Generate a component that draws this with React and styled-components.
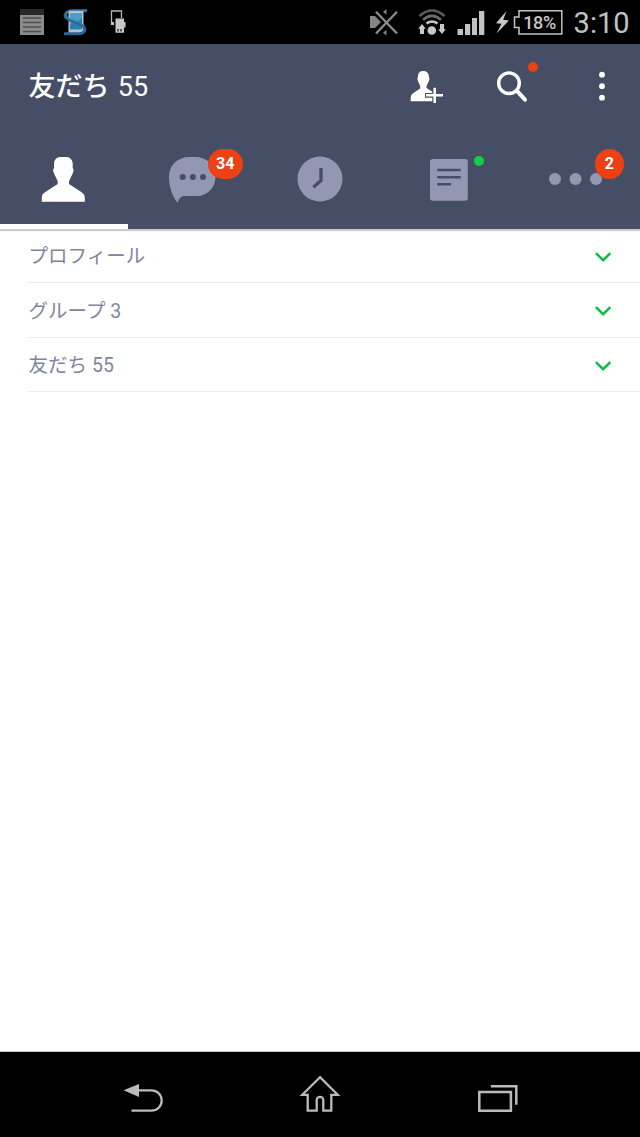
import React from "react"
import styled, { createGlobalStyle } from "styled-components"

const GlobalStyle = createGlobalStyle`
	body {
		margin: 0;
		background: #fff;
		font-family: Roboto, "Noto Sans CJK JP", sans-serif;
	}

	svg {
		display: block;
		flex: none;
	}
`

const Screen = styled.div`
	display: flex;
	flex-direction: column;
	height: 1137px;
	width: 640px;
	overflow: hidden;
`

const StatusBar = styled.div`
	display: flex;
	align-items: center;
	justify-content: space-between;
	height: 44px;
	padding: 0 10.5px 0 19px;
	box-sizing: border-box;
	background: #000;
`

const StatusGroup = styled.div`
	display: flex;
	align-items: center;
	gap: ${({ $gap }) => $gap}px;
`

const PowerGroup = styled(StatusGroup)`
	margin-left: -9px;
`

const Battery = styled.div`
	position: relative;
	width: 50px;
	height: 28px;
	margin-left: -3px;
`

const BatteryText = styled.span`
	position: absolute;
	inset: 0 0 0 3px;
	line-height: 29px;
	font-size: 18px;
	font-weight: 500;
	letter-spacing: -0.4px;
	text-align: center;
	color: #c6c6c6;
`

const Clock = styled.span`
	width: 56px;
	margin-left: 4.5px;
	padding-top: 2px;
	font-size: 29px;
	line-height: 42px;
	text-align: right;
	white-space: nowrap;
	color: #c2c2c2;
`

const Header = styled.header`
	position: relative;
	z-index: 1;
	display: flex;
	align-items: center;
	justify-content: space-between;
	height: 86px;
	padding-left: 28.5px;
	background: #464e65;
`

const Title = styled.h1`
	margin: 0;
	font-size: 27px;
	font-weight: 500;
	line-height: 40px;
	color: #fff;
`

const Count = styled.span`
	margin-left: 1.5px;
	font-weight: 400;
`

const Actions = styled.div`
	display: flex;
`

const Action = styled.div`
	position: relative;
	display: flex;
	justify-content: center;
	width: ${({ $width }) => $width}px;
`

const Tabs = styled.nav`
	position: relative;
	display: grid;
	grid-template-columns: repeat(5, 1fr);
	height: 99px;
	background: #464e65;
	box-shadow: 0 2px 1px rgba(0, 0, 0, 0.2);
`

const Tab = styled.div`
	position: relative;
	display: flex;
	justify-content: center;
	padding-top: 18px;
	box-sizing: border-box;
	border-bottom: 5px solid ${({ $active }) => ($active ? "#fff" : "transparent")};
	color: ${({ $active }) => ($active ? "#fff" : "#9397b2")};
`

const Badge = styled.span`
	position: absolute;
	top: 19px;
	left: ${({ $left }) => $left}px;
	width: ${({ $width }) => $width}px;
	height: 29.5px;
	border-radius: 15px;
	background: #ee4015;
	color: #fff;
	font-size: 16px;
	font-weight: 700;
	line-height: 29.5px;
	text-align: center;
`

const Dot = styled.span`
	position: absolute;
	top: ${({ $top }) => $top}px;
	left: ${({ $left }) => $left}px;
	width: 10px;
	height: 10px;
	border-radius: 50%;
	background: ${({ $color }) => $color};
`

const List = styled.ul`
	flex: 1;
	margin: 0;
	padding: 0 0 0 28px;
	list-style: none;
	background: #fff;
	border-bottom: 1px solid #c4c4c4;
`

const ListItem = styled.li`
	display: flex;
	align-items: center;
	justify-content: space-between;
	height: 54.33px;
	padding: 0 28px 0 0.6px;
	box-sizing: border-box;
	border-bottom: 1px solid #ececee;
	font-size: 19.5px;
	color: #80869a;

	span {
		margin-bottom: 1.5px;
	}

	svg {
		margin-top: 3px;
	}
`

const NavBar = styled.footer`
	display: flex;
	justify-content: center;
	height: 85px;
	background: #000;
`

const NavButton = styled.div`
	display: flex;
	justify-content: center;
	width: 177.5px;
	padding-top: 20px;
`

const NoteIcon = () => (
	<svg width="26" height="28" viewBox="0 0 26 28">
		<rect x="1" y="1" width="24" height="26" fill="#8b8b8b" />
		<rect x="1" y="1" width="24" height="6" fill="#292929" />
		<path d="M4 10h18M4 14.5h18M4 19h18M4 23.5h18" stroke="#505050" strokeWidth="1.3" />
	</svg>
)

const SyncIcon = () => (
	<svg width="26" height="28" viewBox="0 0 26 28">
		<path
			d="M24 2.8H9C3 2.8.5 7 3.2 10.2"
			fill="none"
			stroke="#2b6896"
			strokeWidth="2.8"
		/>
		<rect x="5.5" y="3" width="15" height="23" fill="#b9c0c6" />
		<rect x="7" y="5.5" width="12" height="16" fill="#2682b3" />
		<path d="M7 5.5h12v5l-12 6z" fill="#4a9ccd" />
		<path
			d="M2.5 8.5c3 5.5 14.5 5 18.5 10.5 2.300 3.500-.5 6.700-5 6.700H1"
			fill="none"
			stroke="#2a6591"
			strokeWidth="3"
		/>
		<path
			d="M24 2.200H9C4.500 2.200 2 6 3.500 8.600c3 4 14 4.500 17.500 9.400"
			fill="none"
			stroke="#4586b3"
			strokeWidth="1.2"
		/>
	</svg>
)

const UsbIcon = () => (
	<svg width="18" height="28" viewBox="0 0 18 28">
		<path d="M3.5 16h-2V3h10v7" fill="none" stroke="#b5b5b5" strokeWidth="1.3" />
		<path d="M1 14h3v3H1z" fill="#c4c4c4" />
		<path d="M5.5 10.500H14V14h1.500v5.500H14v5.200H5.500z" fill="#c8c8c8" />
		<path d="M8 21v2.500M11 21v2.500" stroke="#333" strokeWidth="1.5" />
	</svg>
)

const MuteIcon = () => (
	<svg width="30" height="28" viewBox="0 0 30 28">
		<path d="M1 8h5l6 6-6 6H1zM17.500 1v5.500L14 4zM17.500 27.500V22L14 24.500z" fill="#858585" />
		<path d="M7 3.800 28 25.500M28 3.800 7 25.500" stroke="#000" strokeWidth="4" />
		<path d="M7 3.800 28 25.500M28 3.800 7 25.500" stroke="#8c8c8c" strokeWidth="2.3" />
	</svg>
)

const WifiIcon = () => (
	<svg width="28" height="28" viewBox="0 0 28 28">
		<g fill="none" strokeWidth="2.6">
			<path d="M1.500 8Q14-3 26.500 8" stroke="#5c5c5c" />
			<path d="M5 11.800Q14 4 23 11.800" stroke="#6d6d6d" />
			<path d="M8.500 15.500Q14 11.500 19.500 15.500" stroke="#c8c8c8" />
		</g>
		<circle cx="13.8" cy="22.5" r="4.3" fill="#c8c8c8" />
		<path
			d="M4 16 .2 20.800H2V26h4v-5.200h1.800zM24 26l-3.800-4.800H22V16h4v5.200h1.800z"
			fill="#c8c8c8"
		/>
	</svg>
)

const SignalIcon = () => (
	<svg width="28" height="28" viewBox="0 0 28 28">
		<path
			d="M.5 21H6v6H.5zM8 16h5.200v11H8zM15 10h5v17h-5zM22 3h5.300v24H22z"
			fill="#c3c3c3"
		/>
	</svg>
)

const BoltIcon = () => (
	<svg width="15" height="28" viewBox="0 0 15 28">
		<path d="M11.500 3 1 15.200l5.500.6L1.500 25.500 14 12.500l-5.800-.7z" fill="#c8c8c8" />
	</svg>
)

const BatteryIcon = () => (
	<svg width="50" height="28" viewBox="0 0 50 28">
		<path
			d="M6 2.700h42.800V26H6v-6.500H1.500V9H6z"
			fill="none"
			stroke="#c4c4c4"
			strokeWidth="1.5"
		/>
	</svg>
)

const AddFriendIcon = () => (
	<svg width="36" height="36" viewBox="0 0 36 36">
		<path
			d="M12.800 2h2.700c2.800.5 4.500 2.800 4.500 6.200l.5 1.600-.7 2.500-2.300 4.700v2l8.500 5.500c2 1.500 2 3 2 7.700H1.700c0-4.700 0-6 2-7.700l7.500-5v-2.500L9 12.300l-.6-2.500.4-1.600C8.800 4.800 10.300 2.500 12.800 2z"
			fill="#fff"
		/>
		<path d="M16 26.300h19M25.700 17.500v18" stroke="#464e65" strokeWidth="4.8" />
		<path d="M17 26.300h17M25.700 18.700v15.300" stroke="#fff" strokeWidth="2.5" />
	</svg>
)

const SearchIcon = () => (
	<svg width="36" height="36" viewBox="0 0 36 36" fill="none" stroke="#fff">
		<circle cx="15" cy="14.2" r="10.3" strokeWidth="3.4" />
		<path d="m22.700 21.700 8.300 9" strokeWidth="4" strokeLinecap="round" />
	</svg>
)

const MenuIcon = () => (
	<svg width="36" height="36" viewBox="0 0 36 36" fill="#fff">
		<circle cx="18" cy="5.7" r="2.9" />
		<circle cx="18" cy="17.2" r="2.9" />
		<circle cx="18" cy="28.7" r="2.9" />
	</svg>
)

const FriendsIcon = () => (
	<svg width="64" height="64" viewBox="0 0 64 64" fill="currentColor">
		<path d="M27.300 9h8c3.300.6 5.100 3 5.400 6.300V20l1 2-1 3.500-3.700 7.800V36l11.500 7.500c3.200 2 4.300 3.500 4.300 6.300v3.900h-43v-3.900c0-2.800 1.100-4.300 4.300-6.300L25.700 36v-2.700L22 25.500 21 22l1-2v-4.700c.3-3.300 2-5.700 5.300-6.300z" />
	</svg>
)

const ChatIcon = () => (
	<svg width="64" height="64" viewBox="0 0 64 64">
		<path
			d="M30 9h5c12 0 20.500 8 20.500 19.500S47 48 37 48H24.500c-3.500 0-5 2-7 6.700C12 48 9 38 9 29 9 17 17.500 9 30 9z"
			fill="currentColor"
		/>
		<g fill="#464e65">
			<circle cx="22.7" cy="29" r="3" />
			<circle cx="32.8" cy="29" r="3" />
			<circle cx="43" cy="29" r="3" />
		</g>
	</svg>
)

const TimelineIcon = () => (
	<svg width="64" height="64" viewBox="0 0 64 64">
		<circle cx="32" cy="31" r="22.5" fill="currentColor" />
		<path d="M33 20v12.500l-7.700 6.800" fill="none" stroke="#464e65" strokeWidth="3.3" />
	</svg>
)

const NewsIcon = () => (
	<svg width="64" height="64" viewBox="0 0 64 64">
		<rect x="14" y="11" width="37.8" height="41.8" rx="2.8" fill="currentColor" />
		<path d="M21.200 22h23.500M21.200 29.300h23.500M21.200 36.300H35" stroke="#464e65" strokeWidth="2.6" />
	</svg>
)

const MoreIcon = () => (
	<svg width="64" height="64" viewBox="0 0 64 64" fill="currentColor">
		<circle cx="11" cy="31" r="6" />
		<circle cx="31.6" cy="31" r="6" />
		<circle cx="52" cy="31" r="6" />
	</svg>
)

const ChevronIcon = () => (
	<svg width="18" height="12" viewBox="0 0 18 12">
		<path d="m1.900 2.200 7.200 7 7.200-7" fill="none" stroke="#09bf41" strokeWidth="2.5" />
	</svg>
)

const BackIcon = () => (
	<svg width="44" height="44" viewBox="0 0 44 44">
		<path d="M2.500 18.300 18 12v13z" fill="#bbb" />
		<path d="M17 18.300h13.500a10.200 10.200 0 0 1 0 20.400h-20" fill="none" stroke="#bbb" strokeWidth="2.3" />
	</svg>
)

const HomeIcon = () => (
	<svg width="44" height="44" viewBox="0 0 44 44">
		<path
			d="M22 5.200 4.300 22.800h5.400v15.900h9V28.200a3.300 3.300 0 0 1 6.600 0v10.500h8V22.800h6.400z"
			fill="none"
			stroke="#bbb"
			strokeWidth="2.3"
		/>
	</svg>
)

const RecentIcon = () => (
	<svg width="44" height="44" viewBox="0 0 44 44" fill="none" stroke="#bbb" strokeWidth="2.5">
		<path d="M3.300 20h31.600v18.700H3.300zM14.800 14.300h25.500v18.500" />
	</svg>
)

const sections = ["プロフィール", "グループ 3", "友だち 55"]

const App = () => (
	<Screen>
		<GlobalStyle />
		<StatusBar>
			<StatusGroup $gap={21}>
				<StatusGroup $gap={18}>
					<NoteIcon />
					<SyncIcon />
				</StatusGroup>
				<UsbIcon />
			</StatusGroup>
			<StatusGroup $gap={19}>
				<MuteIcon />
				<StatusGroup $gap={11}>
					<WifiIcon />
					<SignalIcon />
				</StatusGroup>
				<PowerGroup $gap={6}>
					<BoltIcon />
					<Battery>
						<BatteryIcon />
						<BatteryText>18%</BatteryText>
					</Battery>
					<Clock>3:10</Clock>
				</PowerGroup>
			</StatusGroup>
		</StatusBar>
		<Header>
			<Title>
				友だち <Count>55</Count>
			</Title>
			<Actions>
				<Action $width={66}>
					<AddFriendIcon />
				</Action>
				<Action $width={104}>
					<SearchIcon />
					<Dot $top={-7} $left={68} $color="#ee4015" />
				</Action>
				<Action $width={76}>
					<MenuIcon />
				</Action>
			</Actions>
		</Header>
		<Tabs>
			<Tab $active>
				<FriendsIcon />
			</Tab>
			<Tab>
				<ChatIcon />
				<Badge $left={80} $width={34.6}>34</Badge>
			</Tab>
			<Tab>
				<TimelineIcon />
			</Tab>
			<Tab>
				<NewsIcon />
				<Dot $top={26} $left={89.7} $color="#12ce45" />
			</Tab>
			<Tab>
				<MoreIcon />
				<Badge $left={82.6} $width={29.5}>2</Badge>
			</Tab>
		</Tabs>
		<List>
			{sections.map((section) => (
				<ListItem key={section}>
					<span>{section}</span>
					<ChevronIcon />
				</ListItem>
			))}
		</List>
		<NavBar>
			<NavButton>
				<BackIcon />
			</NavButton>
			<NavButton>
				<HomeIcon />
			</NavButton>
			<NavButton>
				<RecentIcon />
			</NavButton>
		</NavBar>
	</Screen>
)

export default App
